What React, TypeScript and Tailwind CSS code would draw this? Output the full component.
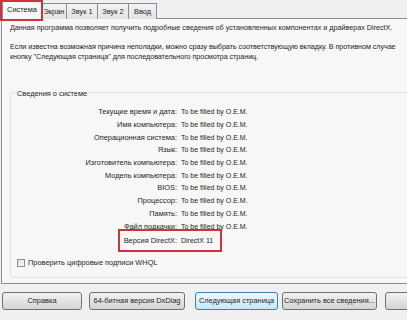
import React from "react";

const rows: [string, string][] = [
  ["Текущие время и дата:", "To be filled by O.E.M."],
  ["Имя компьютера:", "To be filled by O.E.M."],
  ["Операционная система:", "To be filled by O.E.M."],
  ["Язык:", "To be filled by O.E.M."],
  ["Изготовитель компьютера:", "To be filled by O.E.M."],
  ["Модель компьютера:", "To be filled by O.E.M."],
  ["BIOS:", "To be filled by O.E.M."],
  ["Процессор:", "To be filled by O.E.M."],
  ["Память:", "To be filled by O.E.M."],
  ["Файл подкачки:", "To be filled by O.E.M."],
];

function Tab({ label, width }: { label: string; width: string }) {
  return (
    <div
      className={`${width} h-[16px] -ml-px flex items-center justify-center border border-b-0 border-[#898c95] bg-gradient-to-b from-[#f3f3f3] to-[#e3e3e3]`}
    >
      {label}
    </div>
  );
}

function Button({ label, width, focused }: { label: string; width: string; focused?: boolean }) {
  return (
    <div
      className={`${width} h-[18px] shrink-0 flex items-center justify-center whitespace-nowrap rounded-[3px] border ${
        focused
          ? "border-[#3c7fb1] bg-gradient-to-b from-[#eef7fd] to-[#c9e8fb]"
          : "border-[#707070] bg-gradient-to-b from-[#f2f2f2] to-[#d4d4d4]"
      }`}
    >
      {label}
    </div>
  );
}

export default function App() {
  return (
    <div className="w-[407px] h-[320px] overflow-hidden bg-[#f0f0f0] font-['Liberation_Sans',Arial,sans-serif] text-[7.4px] leading-[10px] text-[#1e1e1e]">
      {/* Tabs */}
      <div className="relative flex items-end h-[19px] pl-[3px]">
        <div className="relative z-10 w-[40px] h-[19px] -ml-px flex items-center justify-center border border-b-0 border-[#898c95] bg-[#f7f7f7]">
          Система
        </div>
        <Tab label="Экран" width="w-[26px]" />
        <Tab label="Звук 1" width="w-[32px]" />
        <Tab label="Звук 2" width="w-[32px]" />
        <Tab label="Ввод" width="w-[29px]" />
        <div className="absolute left-0 top-0 z-20 w-[43px] h-[21px] border-2 border-[#d0313a]" />
      </div>

      {/* Panel */}
      <div className="-mt-px ml-px mr-[-6px] h-[266px] border border-[#898c95] bg-[#f7f7f7] pl-[8px] pt-[4px]">
        <p className="whitespace-nowrap text-[7.2px]">
          Данная программа позволяет получить подробные сведения об установленных компонентах и драйверах DirectX.
        </p>
        <p className="mt-[9px] whitespace-nowrap text-[7.2px] tracking-[-0.05px]">
          Если известна возможная причина неполадки, можно сразу выбрать соответствующую вкладку. В противном случае
          <br />
          кнопку "Следующая страница" для последовательного просмотра страниц.
        </p>

        {/* Group box */}
        <div className="relative mt-[30px] rounded-[3px] border border-[#dae2e8] pt-[13px] pb-[9px]">
          <div className="absolute -top-[3px] left-[5px] px-[1px] bg-[#f7f7f7] leading-[7px]">
            Сведения о системе
          </div>
          {rows.map(([k, v]) => (
            <div key={k} className="flex h-[12.7px] items-center">
              <div className="w-[166px] text-right">{k}</div>
              <div className="ml-[4px] text-[7px]">{v}</div>
            </div>
          ))}
          <div className="relative flex h-[12.7px] items-center mt-[1.5px]">
            <div className="w-[166px] text-right">Версия DirectX:</div>
            <div className="ml-[4px] text-[7px]">DirectX 11</div>
            <div className="absolute left-[107px] -top-[5px] w-[104px] h-[23px] border-2 border-[#d0313a]" />
          </div>
          <div className="flex items-center mt-[11px] ml-[6px]">
            <div className="w-[8px] h-[8px] border border-[#8e8f8f] bg-gradient-to-br from-[#dcdcdc] to-[#fbfbfb]" />
            <span className="ml-[3px]">Проверить цифровые подписи WHQL</span>
          </div>
        </div>
      </div>

      {/* Buttons */}
      <div className="flex mt-[8px] pl-[2px]">
        <Button label="Справка" width="w-[80px]" />
        <div className="ml-[7px] shrink-0">
          <Button label="64-битная версия DxDiag" width="w-[96px]" />
        </div>
        <div className="ml-[10px] shrink-0">
          <Button label="Следующая страница" width="w-[83px]" focused />
        </div>
        <div className="ml-[4px] shrink-0">
          <Button label="Сохранить все сведения..." width="w-[95px]" />
        </div>
        <div className="ml-[8px] shrink-0">
          <Button label="" width="w-[80px]" />
        </div>
      </div>
    </div>
  );
}
